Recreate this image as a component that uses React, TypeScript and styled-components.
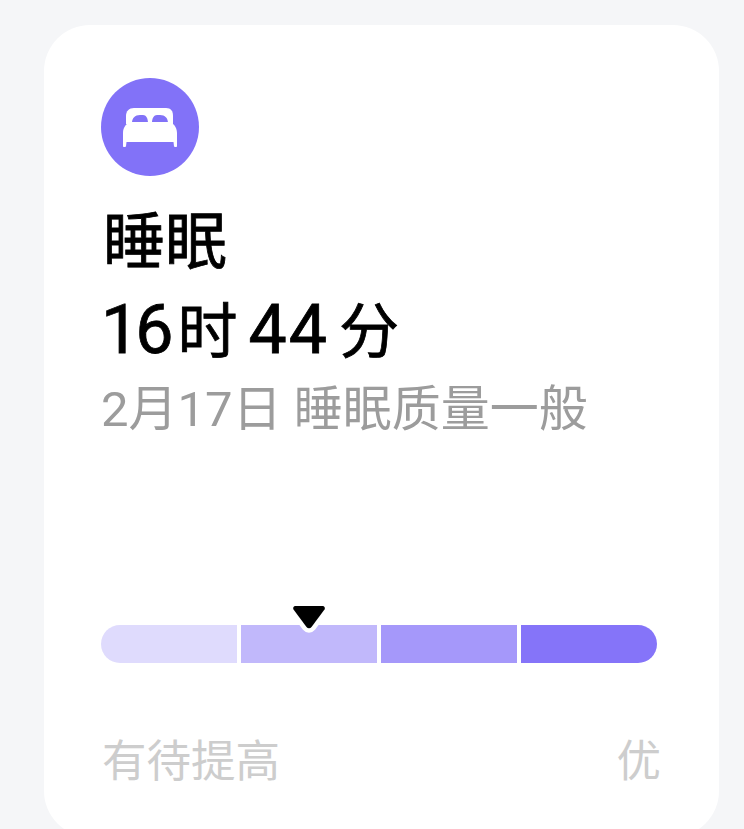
import * as React from 'react';
import styled, { createGlobalStyle } from 'styled-components';

const GlobalStyle = createGlobalStyle`
  html, body {
    margin: 0;
    height: 100%;
    overflow: hidden;
    background: #f5f6f8;
  }
  body {
    font-family: "Roboto", "Noto Sans CJK SC", sans-serif;
  }
`;

const Page = styled.div`
  box-sizing: border-box;
  height: 829px;
  padding: 25px 25px 0 44px;
  overflow: hidden;
`;

const Card = styled.div`
  box-sizing: border-box;
  height: 812px;
  padding: 53px 62px 0 57px;
  background: #fff;
  border-radius: 46px;
  display: flex;
  flex-direction: column;
`;

const IconCircle = styled.div`
  width: 98px;
  height: 98px;
  border-radius: 50%;
  background: #8272f8;
  display: flex;
  align-items: center;
  justify-content: center;
`;

const Title = styled.div`
  margin-top: 33px;
  padding-left: 2px;
  height: 68px;
  font-size: 62px;
  line-height: 68px;
  font-weight: 400;
  -webkit-text-stroke: 0.8px #000;
  color: #000;
`;

const Duration = styled.div`
  margin-top: 13px;
  height: 80px;
  font-size: 60px;
  line-height: 80px;
  -webkit-text-stroke: 0.8px #000;
  color: #000;
  white-space: nowrap;
`;

const Num = styled.span<{ $spacing: number }>`
  font-size: 68px;
  letter-spacing: ${p => p.$spacing}px;
`;

const Unit = styled.span<{ $left: number; $right: number }>`
  margin: 0 ${p => p.$right}px 0 ${p => p.$left}px;
`;

const Summary = styled.div`
  margin-top: 10px;
  height: 60px;
  font-size: 49px;
  line-height: 60px;
  color: #9c9c9c;
  white-space: nowrap;
`;

const Day = styled.span`
  font-size: 49px;
`;

const BarWrap = styled.div`
  position: relative;
  margin-top: 185px;
`;

const Bar = styled.div`
  display: grid;
  grid-template-columns: repeat(4, 1fr);
  gap: 4px;
  height: 38px;
  border-radius: 19px;
  overflow: hidden;
`;

const Segment = styled.div<{ $color: string }>`
  background: ${p => p.$color};
`;

const Marker = styled.svg`
  position: absolute;
  left: 188px;
  top: -22px;
  width: 40px;
  height: 40px;
`;

const Scale = styled.div`
  margin-top: 71px;
  display: flex;
  justify-content: space-between;
  font-size: 44.5px;
  line-height: 56px;
  color: #cdcdcd;
`;

const ScaleStart = styled.span`
  padding-left: 1px;
`;

const ScaleEnd = styled.span`
  margin-right: -4px;
`;

const segments = ['#dfdbfd', '#c1b8fb', '#a598fa', '#8574f9'];

function BedIcon() {
  return (
    <svg width="54" height="39" viewBox="0 0 54 39">
      <path
        fill="#fff"
        d="M3 16V8C3 3 6 0 11 0h32c5 0 7 3 7 8v8z"
      />
      <path
        fill="#8272f8"
        d="M9 15c0-5 3-8 8-8h3c3 0 5 3 5 8zM29 15c0-5 2-8 5-8h3c5 0 8 3 8 8z"
      />
      <path
        fill="#fff"
        d="M9 14h36c5 0 9 5 9 11v13c0 .6-.4 1-1 1h-1c-.5 0-.8-.3-1-.8L50.500 34h-47L3 38.200c-.2.500-.5.8-1 .8H1c-.6 0-1-.4-1-1V25c0-6 4-11 9-11z"
      />
    </svg>
  );
}

export default function App() {
  return (
    <Page>
      <GlobalStyle />
      <Card>
        <IconCircle>
          <BedIcon />
        </IconCircle>
        <Title>睡眠</Title>
        <Duration>
          <Num $spacing={-4}>16</Num>
          <Unit $left={8} $right={11}>时</Unit>
          <Num $spacing={2}>44</Num>
          <Unit $left={10} $right={0}>分</Unit>
        </Duration>
        <Summary>
          <Day>2</Day>月<Day>17</Day>日 睡眠质量一般
        </Summary>
        <BarWrap>
          <Bar>
            {segments.map(color => (
              <Segment key={color} $color={color} />
            ))}
          </Bar>
          <Marker viewBox="0 0 40 40">
            <path
              d="M6.500 3h27c2 0 3 2 2 3.500L22.500 24c-1.300 1.600-3.700 1.600-5 0L4.500 6.500C3.500 5 4.500 3 6.500 3z"
              fill="#000"
              stroke="#fff"
              strokeWidth="9"
              paintOrder="stroke"
            />
          </Marker>
        </BarWrap>
        <Scale>
          <ScaleStart>有待提高</ScaleStart>
          <ScaleEnd>优</ScaleEnd>
        </Scale>
      </Card>
    </Page>
  );
}
